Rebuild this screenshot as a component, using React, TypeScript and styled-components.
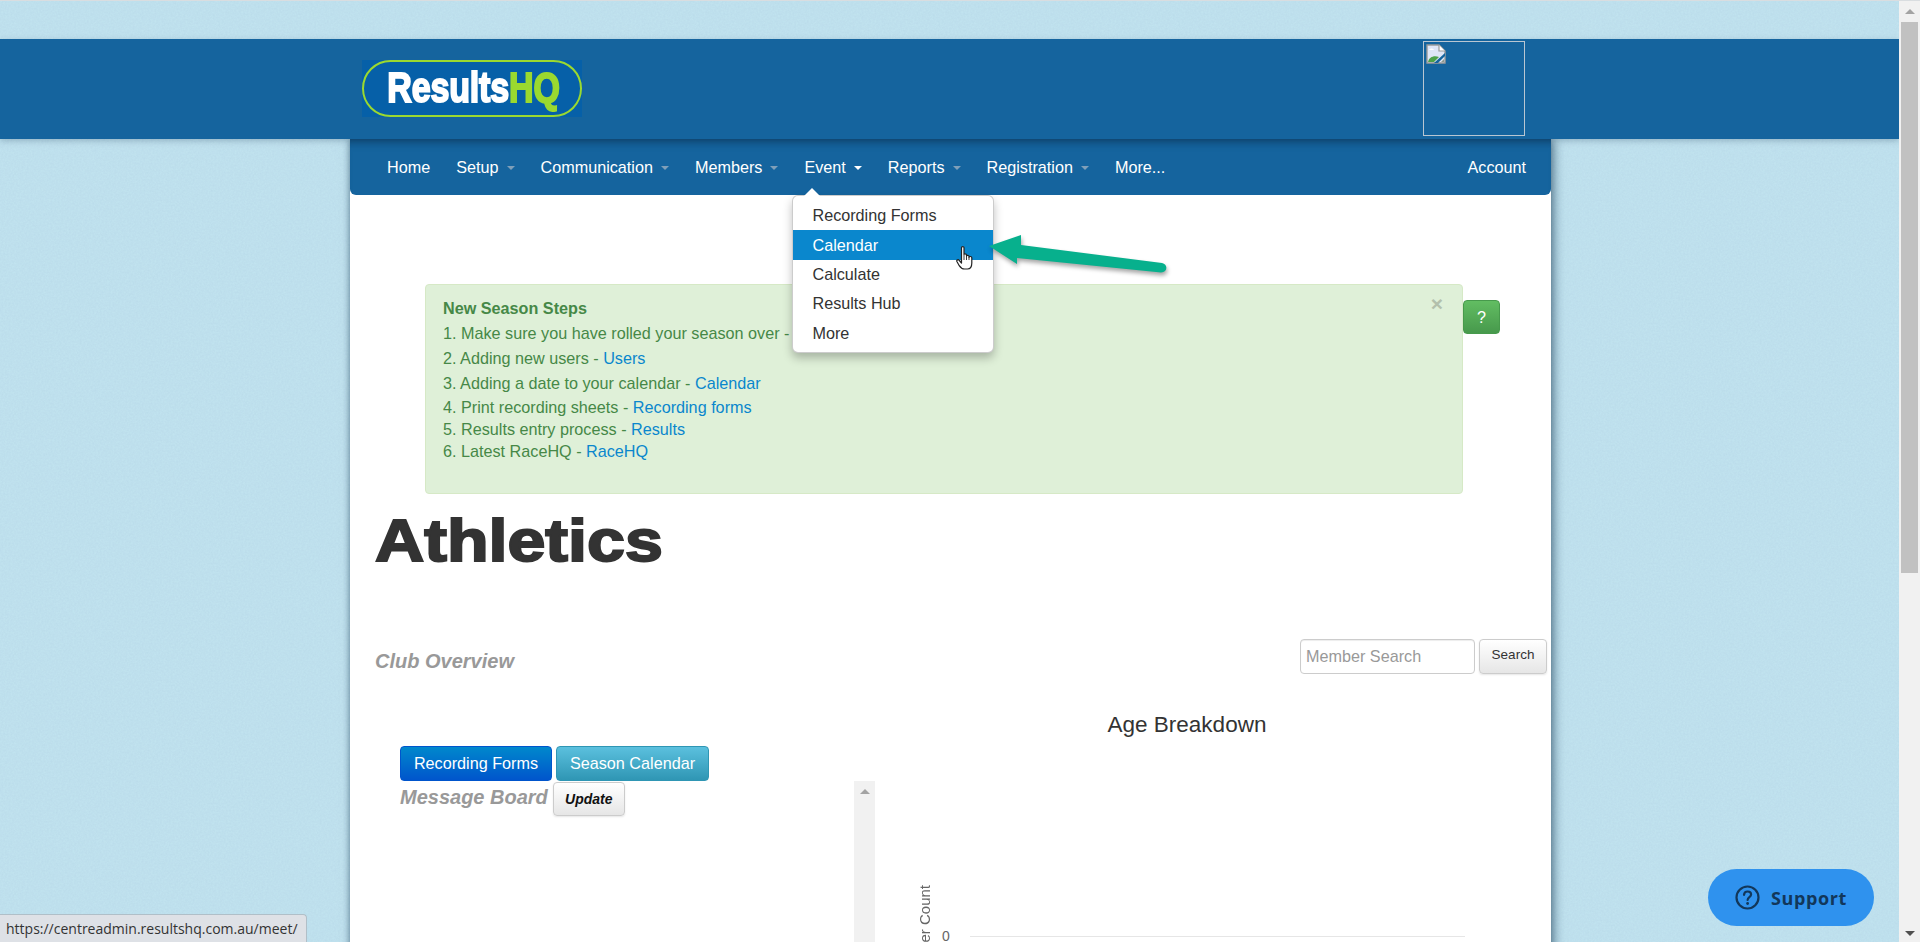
import styled, { createGlobalStyle } from "styled-components";

const noise =
  "data:image/svg+xml,%3Csvg xmlns='http://www.w3.org/2000/svg' width='240' height='240'%3E%3Cfilter id='n'%3E%3CfeTurbulence type='fractalNoise' baseFrequency='0.55' numOctaves='3' stitchTiles='stitch'/%3E%3CfeColorMatrix values='0 0 0 0 0.45 0 0 0 0 0.65 0 0 0 0 0.78 0 0 0 0.6 -0.1'/%3E%3C/filter%3E%3Crect width='240' height='240' filter='url(%23n)'/%3E%3C/svg%3E";

const GlobalStyle = createGlobalStyle`
  html, body {
    margin: 0;
    padding: 0;
    height: 100%;
    overflow: hidden;
  }
  body {
    font-family: "Liberation Sans", Arial, sans-serif;
    font-size: 16.2px;
    color: #333;
  }
  * {
    box-sizing: border-box;
  }
`;

const Page = styled.div`
  position: relative;
  height: 942px;
  display: flex;
  overflow: hidden;
`;

const Viewport = styled.div`
  flex: 1;
  min-width: 0;
  height: 100%;
  padding-top: 38px;
  border-top: 1px solid #d9dde0;
  background-color: #c1e3ef;
  background-image: url("${noise}");
  overflow: hidden;
`;

const Header = styled.header`
  position: relative;
  z-index: 2;
  height: 100px;
  background: #15649e;
  box-shadow: 0 2px 6px rgba(20, 50, 80, 0.25);
`;

const HeaderInner = styled.div`
  width: 1201px;
  height: 100%;
  margin-left: 350px;
  padding: 0 26px 2px 12px;
  display: flex;
  align-items: center;
  justify-content: space-between;
`;

const LogoBox = styled.div`
  width: 220px;
  height: 57px;
  background: #0660a8;
  display: flex;
`;

const LogoPill = styled.div`
  flex: 1;
  border: 2.5px solid #9bd92f;
  border-radius: 29px;
  display: flex;
  align-items: center;
  justify-content: center;
  overflow: hidden;
  white-space: nowrap;
`;

const LogoText = styled.span`
  display: inline-block;
  margin-left: 3px;
  transform: scaleX(0.81);
  font-size: 42px;
  font-weight: 700;
  letter-spacing: -0.2px;
  color: #fff;
  -webkit-text-stroke: 2px #fff;
`;

const LogoAccent = styled.span`
  color: #9bd92f;
  -webkit-text-stroke: 2px #9bd92f;
`;

const BrokenImage = styled.div`
  width: 102px;
  height: 95px;
  border: 1px solid #b9c6d2;
  padding: 2px;
`;

const Panel = styled.main`
  position: relative;
  z-index: 1;
  width: 1201px;
  height: 900px;
  margin-left: 350px;
  background: #fff;
  box-shadow: 3px 0 10px rgba(25, 60, 85, 0.6), -1px 0 5px rgba(25, 60, 85, 0.3);
`;

const Navbar = styled.nav`
  height: 56px;
  padding: 0 25px 0 24px;
  display: flex;
  align-items: center;
  background: #15649e;
  box-shadow: inset 0 10px 10px -8px rgba(10, 40, 70, 0.55);
  border-radius: 0 0 6px 6px;
`;

const NavItem = styled.div<{ $right?: boolean }>`
  position: relative;
  height: 100%;
  padding: ${({ $right }) => ($right ? "1px 0 0" : "0 13px")};
  margin-left: ${({ $right }) => ($right ? "auto" : "0")};
  display: flex;
  align-items: center;
  color: #fff;
`;

const Caret = styled.span<{ $open?: boolean }>`
  width: 0;
  height: 0;
  margin: 2px 0 0 8px;
  border-left: 4.5px solid transparent;
  border-right: 4.5px solid transparent;
  border-top: 4.5px solid ${({ $open }) => ($open ? "#fff" : "#7f9fb9")};
`;

const Dropdown = styled.div`
  position: absolute;
  top: 100%;
  left: 1px;
  z-index: 5;
  width: 202px;
  height: 158px;
  padding: 5px 0;
  background: #fff;
  border: 1px solid rgba(0, 0, 0, 0.2);
  border-radius: 6px;
  box-shadow: 0 5px 10px rgba(0, 0, 0, 0.25);

  &::before {
    content: "";
    position: absolute;
    top: -8px;
    left: 11px;
    border-left: 8px solid transparent;
    border-right: 8px solid transparent;
    border-bottom: 8px solid #fff;
  }
`;

const DropdownItem = styled.div<{ $active?: boolean }>`
  height: 29.4px;
  padding: 0 19px;
  display: flex;
  align-items: center;
  color: ${({ $active }) => ($active ? "#fff" : "#333")};
  background: ${({ $active }) => ($active ? "#0a87cd" : "transparent")};
`;

const AlertRow = styled.div`
  margin-top: 89px;
  padding-left: 75px;
  display: flex;
  align-items: flex-start;
`;

const Alert = styled.section`
  position: relative;
  width: 1038px;
  height: 210px;
  padding: 11px 17px;
  background: #dff0d8;
  border: 1px solid #d6e9c6;
  border-radius: 4px;
  color: #468847;
`;

const CloseMark = styled.span`
  position: absolute;
  top: 9px;
  right: 19px;
  font-size: 21px;
  line-height: 20px;
  font-weight: 700;
  color: #b3c0ac;
`;

const AlertLine = styled.div<{ $h: number; $bold?: boolean }>`
  height: ${({ $h }) => $h}px;
  line-height: ${({ $h }) => $h}px;
  font-weight: ${({ $bold }) => ($bold ? 700 : 400)};
`;

const TextLink = styled.a`
  color: #0a87cd;
`;

const HelpButton = styled.button`
  width: 37px;
  height: 34px;
  margin-top: 16px;
  padding: 0;
  font: inherit;
  color: #fff;
  background: linear-gradient(#62bd62, #47994c);
  border: 1px solid #479a4c;
  border-radius: 4px;
`;

const Title = styled.h1`
  margin: 15px 0 0 25px;
  height: 64px;
  font-size: 59px;
  line-height: 64px;
  font-weight: 700;
  color: #333;
  -webkit-text-stroke: 2px #333;
  transform: scaleX(1.155);
  transform-origin: left center;
`;

const OverviewRow = styled.div`
  margin-top: 66px;
  padding: 0 4px 0 25px;
  display: flex;
  align-items: center;
`;

const SectionTitle = styled.h2`
  margin: 0;
  font-size: 20px;
  font-weight: 700;
  font-style: italic;
  color: #999;
`;

const OverviewTitle = styled(SectionTitle)`
  padding-top: 9px;
`;

const SearchForm = styled.div`
  margin-left: auto;
  display: flex;
  gap: 4px;
`;

const SearchInput = styled.input`
  width: 175px;
  height: 35px;
  padding: 0 5px;
  font: inherit;
  background: #fff;
  border: 1px solid #ccc;
  border-radius: 4px;
  box-shadow: inset 0 1px 1px rgba(0, 0, 0, 0.075);

  &::placeholder {
    color: #999;
    opacity: 1;
  }
`;

const DefaultButton = styled.button<{ $italic?: boolean; $w: number; $h: number }>`
  width: ${({ $w }) => $w}px;
  height: ${({ $h }) => $h}px;
  padding: ${({ $italic }) => ($italic ? "0" : "0 0 4px")};
  font-family: inherit;
  font-size: ${({ $italic }) => ($italic ? 14 : 13.5)}px;
  font-weight: ${({ $italic }) => ($italic ? 700 : 400)};
  font-style: ${({ $italic }) => ($italic ? "italic" : "normal")};
  color: ${({ $italic }) => ($italic ? "#111" : "#333")};
  background: linear-gradient(#fff, #e6e6e6);
  border: 1px solid #ccc;
  border-radius: 4px;
  box-shadow: 0 1px 2px rgba(0, 0, 0, 0.1);
`;

const Columns = styled.div`
  margin-top: 37px;
  display: grid;
  grid-template-columns: 526px 1fr;
`;

const LeftColumn = styled.div`
  padding: 35px 1px 0 50px;
`;

const ButtonRow = styled.div`
  display: flex;
  gap: 4px;
`;

const ColorButton = styled.button<{ $from: string; $to: string; $w: number }>`
  width: ${({ $w }) => $w}px;
  height: 35px;
  padding: 0;
  font: inherit;
  color: #fff;
  background: linear-gradient(${({ $from }) => $from}, ${({ $to }) => $to});
  border: 1px solid ${({ $to }) => $to};
  border-radius: 4px;
`;

const BoardRow = styled.div`
  display: flex;
  align-items: flex-start;
`;

const BoardTitle = styled(SectionTitle)`
  margin: 4px 5px 0 0;
  line-height: 24px;
`;

const UpdateWrap = styled.div`
  margin-top: 1px;
`;

const BoardScroll = styled.div`
  margin-left: auto;
  width: 21px;
  height: 200px;
  padding-top: 8px;
  display: flex;
  justify-content: center;
  background: #f1f1f1;
`;

const ChartColumn = styled.div`
  padding: 0 53px 0 41px;
`;

const ChartTitle = styled.div`
  height: 28px;
  margin-left: -41px;
  font-size: 22.5px;
  line-height: 28px;
  text-align: center;
  color: #333;
`;

const Plot = styled.div`
  margin-top: 145px;
  display: flex;
  align-items: flex-start;
`;

const AxisLabel = styled.div`
  writing-mode: vertical-rl;
  transform: rotate(180deg);
  width: 15px;
  margin-top: 1px;
  font-size: 15px;
  line-height: 15px;
  color: #666;
  white-space: nowrap;
`;

const Tick = styled.div`
  margin: 45px 0 0 10px;
  width: 28px;
  font-size: 14px;
  line-height: 14px;
  color: #666;
`;

const AxisLine = styled.div`
  flex: 1;
  height: 1px;
  margin: 52px 33px 0 0;
  background: #e6e6e6;
`;

const ScrollBar = styled.aside`
  width: 21px;
  height: 100%;
  padding: 0 2px;
  display: flex;
  flex-direction: column;
  align-items: center;
  background: #f1f1f1;
  border-top: 1px solid #d9dde0;
`;

const ScrollArrow = styled.span<{ $down?: boolean }>`
  flex: none;
  width: 0;
  height: 0;
  margin: ${({ $down }) => ($down ? "auto 0 6px" : "8px 0 8px")};
  border-left: 5px solid transparent;
  border-right: 5px solid transparent;
  border-top: ${({ $down }) => ($down ? "5px solid #505050" : "none")};
  border-bottom: ${({ $down }) => ($down ? "none" : "5px solid #a3a3a3")};
`;

const BoardArrow = styled(ScrollArrow)`
  margin: 0;
`;

const ScrollThumb = styled.div`
  width: 17px;
  height: 551px;
  background: #c1c1c1;
`;

const StatusBar = styled.div`
  position: absolute;
  left: 0;
  bottom: 0;
  z-index: 10;
  width: 307px;
  height: 28px;
  padding: 0 0 0 6px;
  font-family: "Open Sans", sans-serif;
  font-size: 14px;
  line-height: 27px;
  color: #333;
  white-space: nowrap;
  background: #dee1e6;
  border: 1px solid #b0bfc8;
  border-width: 1px 1px 0 0;
  border-radius: 0 4px 0 0;
`;

const SupportButton = styled.div`
  position: absolute;
  left: 1708px;
  top: 869px;
  z-index: 10;
  width: 166px;
  height: 57px;
  display: flex;
  align-items: center;
  justify-content: center;
  gap: 11px;
  font-family: "Open Sans", sans-serif;
  font-size: 18px;
  font-weight: 700;
  letter-spacing: 0.6px;
  color: #12375a;
  background: #2f92ee;
  border-radius: 29px;
`;

const ArrowMark = styled.svg`
  position: absolute;
  left: 986px;
  top: 230px;
  z-index: 8;
  filter: drop-shadow(1px 3px 2px rgba(0, 0, 0, 0.35));
`;

const HandCursor = styled.svg`
  position: absolute;
  left: 956px;
  top: 246px;
  z-index: 9;
`;

const navItems = ["Home", "Setup", "Communication", "Members", "Event", "Reports", "Registration", "More..."];
const plainItems = ["Home", "More..."];
const menuItems = ["Recording Forms", "Calendar", "Calculate", "Results Hub", "More"];

const steps = [
  { h: 25, text: "1. Make sure you have rolled your season over - " },
  { h: 25, text: "2. Adding new users - ", link: "Users" },
  { h: 25, text: "3. Adding a date to your calendar - ", link: "Calendar" },
  { h: 22, text: "4. Print recording sheets - ", link: "Recording forms" },
  { h: 22, text: "5. Results entry process - ", link: "Results" },
  { h: 22, text: "6. Latest RaceHQ - ", link: "RaceHQ" },
];

export default function App() {
  return (
    <>
      <GlobalStyle />
      <Page>
        <Viewport>
          <Header>
            <HeaderInner>
              <LogoBox>
                <LogoPill>
                  <LogoText>
                    Results<LogoAccent>HQ</LogoAccent>
                  </LogoText>
                </LogoPill>
              </LogoBox>
              <BrokenImage>
                <svg width="20" height="20" viewBox="0 0 20 20">
                  <path d="M1 1h12l6 6v12H1z" fill="#dfe6f7" stroke="#9a9a9a" strokeWidth="1.4" />
                  <path d="M13 1v6h6" fill="#fff" stroke="#9a9a9a" strokeWidth="1.2" />
                  <path d="M3 6c1-2 4-2 5 0z" fill="#fff" />
                  <path d="M2 18c1-5 6-7 11-5l-5 5z" fill="#4ea24a" />
                  <path d="M8 19 19 9v3l-7 7z" fill="#15649e" />
                  <path d="M15 18l3-3v3z" fill="#8d9a8d" />
                </svg>
              </BrokenImage>
            </HeaderInner>
          </Header>

          <Panel>
            <Navbar>
              {navItems.map((item) => (
                <NavItem key={item}>
                  {item}
                  {!plainItems.includes(item) && <Caret $open={item === "Event"} />}
                  {item === "Event" && (
                    <Dropdown>
                      {menuItems.map((entry) => (
                        <DropdownItem key={entry} $active={entry === "Calendar"}>
                          {entry}
                        </DropdownItem>
                      ))}
                    </Dropdown>
                  )}
                </NavItem>
              ))}
              <NavItem $right>Account</NavItem>
            </Navbar>

            <AlertRow>
              <Alert>
                <CloseMark>×</CloseMark>
                <AlertLine $h={25} $bold>
                  New Season Steps
                </AlertLine>
                {steps.map((step) => (
                  <AlertLine key={step.text} $h={step.h}>
                    {step.text}
                    {step.link && <TextLink>{step.link}</TextLink>}
                  </AlertLine>
                ))}
              </Alert>
              <HelpButton>?</HelpButton>
            </AlertRow>

            <Title>Athletics</Title>

            <OverviewRow>
              <OverviewTitle>Club Overview</OverviewTitle>
              <SearchForm>
                <SearchInput placeholder="Member Search" />
                <DefaultButton $w={68} $h={35}>
                  Search
                </DefaultButton>
              </SearchForm>
            </OverviewRow>

            <Columns>
              <LeftColumn>
                <ButtonRow>
                  <ColorButton $from="#0088cc" $to="#0055cc" $w={152}>
                    Recording Forms
                  </ColorButton>
                  <ColorButton $from="#5bc0de" $to="#2f96b4" $w={153}>
                    Season Calendar
                  </ColorButton>
                </ButtonRow>
                <BoardRow>
                  <BoardTitle>Message Board</BoardTitle>
                  <UpdateWrap>
                    <DefaultButton $italic $w={72} $h={34}>
                      Update
                    </DefaultButton>
                  </UpdateWrap>
                  <BoardScroll>
                    <BoardArrow />
                  </BoardScroll>
                </BoardRow>
              </LeftColumn>

              <ChartColumn>
                <ChartTitle>Age Breakdown</ChartTitle>
                <Plot>
                  <AxisLabel>Member Count</AxisLabel>
                  <Tick>0</Tick>
                  <AxisLine />
                </Plot>
              </ChartColumn>
            </Columns>
          </Panel>
        </Viewport>

        <ScrollBar>
          <ScrollArrow />
          <ScrollThumb />
          <ScrollArrow $down />
        </ScrollBar>

        <ArrowMark width="190" height="50" viewBox="0 0 190 50">
          <path d="M3 16 35 5l0 10 141 18c6 1 6 9-1 9.5L31 28l0 6z" fill="#07b08d" />
        </ArrowMark>

        <HandCursor width="18" height="24" viewBox="0 0 18 24">
          <path
            d="M5.5 1.5C5.5.3 8 .3 8 1.5V8.5C8 7.5 10.5 7.5 10.5 8.8V10C10.5 9 13 9 13 10.3V11.2C13 10.2 15.8 10.2 15.8 11.8V17C15.8 20 14.5 23 11.5 23H8.5C5.5 23 4.5 21.5 3 19.3L.9 15.5C.3 14 2.2 13 3.3 14.5L5.5 17Z"
            fill="#fff"
            stroke="#222"
            strokeWidth="1.2"
            strokeLinejoin="round"
          />
          <path d="M8 9v5M10.5 10v4M13 11v3" stroke="#222" strokeWidth="0.9" fill="none" />
        </HandCursor>

        <StatusBar>https://centreadmin.resultshq.com.au/meet/</StatusBar>

        <SupportButton>
          <svg width="25" height="25" viewBox="0 0 25 25" fill="none">
            <circle cx="12.5" cy="12.5" r="11" stroke="#12375a" strokeWidth="2.2" />
            <path
              d="M9 9.8c.2-2.2 1.7-3.3 3.6-3.3 2 0 3.5 1.2 3.5 3 0 2.7-3.4 2.7-3.5 5.5"
              stroke="#12375a"
              strokeWidth="2.2"
              strokeLinecap="round"
            />
            <circle cx="12.6" cy="18.5" r="1.4" fill="#12375a" />
          </svg>
          Support
        </SupportButton>
      </Page>
    </>
  );
}
